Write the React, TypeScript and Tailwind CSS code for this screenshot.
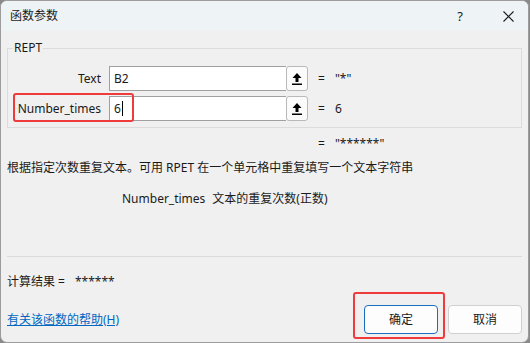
import React from 'react';

const UploadIcon: React.FC = () => (
  <svg width="12" height="14" viewBox="0 0 12 14" className="text-black">
    <path d="M6 1 L10.5 6 L7.5 6 L7.5 10 L4.5 10 L4.5 6 L1.5 6 Z" fill="currentColor" />
    <rect x="1" y="11.5" width="10" height="1.5" fill="currentColor" />
  </svg>
);

const ArgRow: React.FC<{ label: string; value: string; result: string; caret?: boolean }> = ({ label, value, result, caret }) => (
  <div className="flex items-center h-[25px]">
    <div className="w-[93px] text-right">{label}</div>
    <div className="ml-[8px] flex h-full">
      <div className="w-[177px] h-full bg-white border border-[#a0a0a0] border-r-0 flex items-center pl-[4px]">
        {value}
        {caret && <span className="ml-px inline-block w-px h-[15px] bg-black" />}
      </div>
      <button className="w-[22px] h-full bg-[#fbfbfb] border border-[#b9b9b9] rounded-[3px] flex items-center justify-center">
        <UploadIcon />
      </button>
    </div>
    <div className="ml-[10px]">=</div>
    <div className="ml-[10px]">{result}</div>
  </div>
);

export default function App() {
  return (
    <div
      className="relative w-[530px] h-[343px] bg-[#8a8a8a] text-[12px] leading-[16px] text-[#1a1a1a]"
      style={{ fontFamily: '"Noto Sans", "Noto Sans CJK SC", sans-serif' }}
    >
      <div className="w-[529px] h-[343px] rounded-[7px] overflow-hidden border border-[#9c9c9c] bg-[#f0f0f0] flex flex-col">
        {/* title bar */}
        <div className="h-[30px] bg-[#eef3f5] flex items-center pl-[9px] shrink-0">
          <span>函数参数</span>
          <span className="ml-auto mr-[40px] text-[13px]">?</span>
          <span className="mr-[14px]">
            <svg width="11" height="11" viewBox="0 0 11 11" stroke="#1a1a1a" strokeWidth="1.1">
              <path d="M0.5 0.5 L10.5 10.5 M10.5 0.5 L0.5 10.5" />
            </svg>
          </span>
        </div>

        <div className="flex flex-col px-[6px]">
          {/* parameter group */}
          <div className="relative mt-[17px] h-[80px] border border-[#dcdcdc]">
            <span className="absolute left-[5px] -top-[9px] px-px bg-[#f0f0f0]">REPT</span>
            <div className="pt-[17px] flex flex-col gap-[5px]">
              <ArgRow label="Text" value="B2" result={'"*"'} />
              <ArgRow label="Number_times" value="6" result="6" caret />
            </div>
          </div>

          <div className="mt-[8px] pl-[311px] flex">
            <span>=</span>
            <span className="ml-[10px]">"******"</span>
          </div>

          <div className="mt-[8px]">根据指定次数重复文本。可用 RPET 在一个单元格中重复填写一个文本字符串</div>

          <div className="mt-[15px] pl-[115px] flex">
            <span>Number_times</span>
            <span className="ml-[7px]">文本的重复次数(正数)</span>
          </div>

          <div className="mt-[49px] h-px bg-[#dadada]" />

          <div className="mt-[17px] flex">
            <span>计算结果 =</span>
            <span className="ml-[10px]">******</span>
          </div>

          <div className="mt-[15px] flex items-center h-[29px]">
            <a className="text-[#0067c0] underline">有关该函数的帮助(H)</a>
            <button className="ml-auto w-[74px] h-[29px] bg-[#fdfdfd] border border-[#1a6fc4] rounded-[4px]">确定</button>
            <button className="ml-[10px] w-[74px] h-[29px] bg-[#fdfdfd] border border-[#d0d0d0] rounded-[4px]">取消</button>
          </div>
        </div>
      </div>

      {/* annotation boxes */}
      <div className="absolute left-[13px] top-[93px] w-[121px] h-[29px] border-2 border-[#ef3b3b] rounded-[3px]" />
      <div className="absolute left-[353px] top-[292px] w-[92px] h-[47px] border-2 border-[#ef3b3b] rounded-[3px]" />
    </div>
  );
}
